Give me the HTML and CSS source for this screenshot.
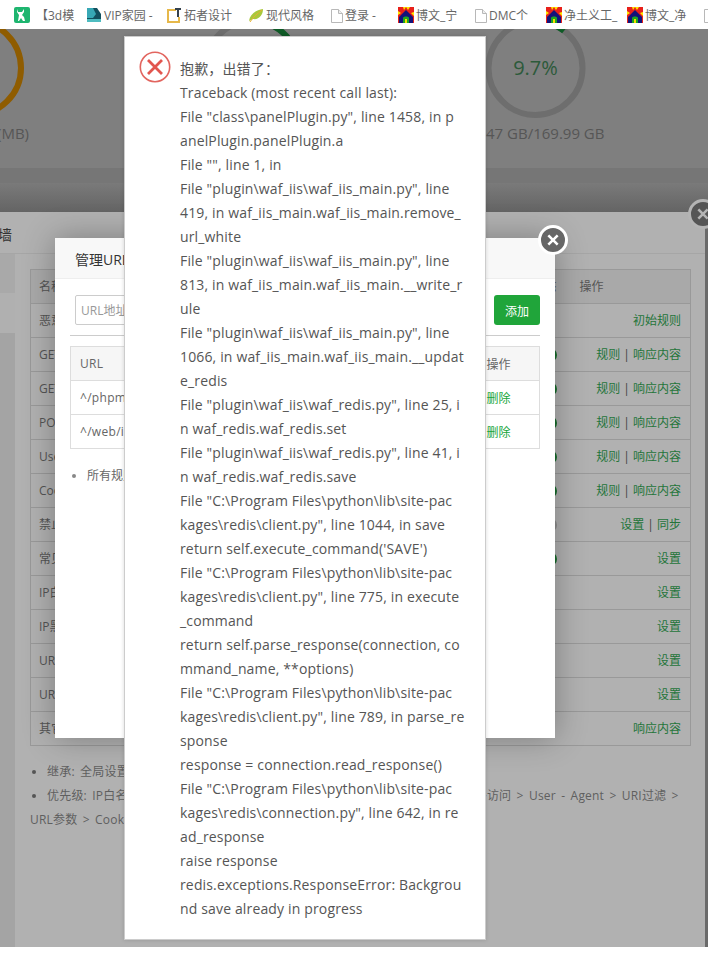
FILE: index.html
```html
<!DOCTYPE html>
<html lang="zh">
<head>
<meta charset="utf-8">
<title>面板</title>
<link rel="stylesheet" href="styles.css">
</head>
<body>
<svg class="defs" width="0" height="0" aria-hidden="true">
  <symbol id="i-house" viewBox="0 0 16 16">
    <rect width="16" height="16" fill="#ffe600"/>
    <path d="M0 0h5l1 3 2-3 2 3 2-3h4v5l-3 1 3 3v7H0V8l3-2-3-2z" fill="#e8201a"/>
    <path d="M8 3 1 10v6h14v-6z" fill="#12127a"/>
    <path d="M5 16v-5c0-2 6-2 6 0v5z" fill="#1fa51f"/>
    <path d="M7 16v-4h2v4z" fill="#f5e000"/>
  </symbol>
  <symbol id="i-page" viewBox="0 0 12 14">
    <path d="M.5.5h7l4 4v9H.5z" fill="#fff" stroke="#b8b8b8"/>
    <path d="M7.5.5v4h4" fill="#eee" stroke="#b8b8b8"/>
  </symbol>
</svg>

<nav class="bar">
  <a class="mark w1"><svg class="fav" viewBox="0 0 16 16"><rect width="16" height="16" rx="2" fill="#1eb56f"/><path d="M3 2l1 3h4l2-3v3l-2 3 2 2 1 4H9L7 11l-2 3H4l1-6-2-3z" fill="#fff"/></svg><span>【3d模</span></a>
  <a class="mark w2"><svg class="fav" viewBox="0 0 16 16"><path d="M1 1h10l4 6v8H1z" fill="#12505e"/><path d="M1 1h6l3 6-3 4H1z" fill="#37a8b5"/><path d="M1 12h14v3H1z" fill="#4fbcc0"/></svg><span>VIP家园 -</span></a>
  <a class="mark w3"><svg class="fav" viewBox="0 0 16 16"><path d="M10 3H2v12h11v-5" fill="none" stroke="#e6b84a" stroke-width="2"/><path d="M9 1h6v2h-2v7h-2V3H9z" fill="#34404c"/></svg><span>拓者设计</span></a>
  <a class="mark w4"><svg class="fav" viewBox="0 0 16 16"><path d="M1 14C2 7 8 3 15 2c0 6-4 11-10 10z" fill="#a8c83c"/><path d="M2 15C5 10 9 7 14 3" stroke="#e8b030" fill="none"/></svg><span>现代风格</span></a>
  <a class="mark w5"><svg class="page" viewBox="0 0 12 14"><use href="#i-page"/></svg><span>登录 -</span></a>
  <a class="mark w6"><svg class="fav"><use href="#i-house"/></svg><span>博文_宁</span></a>
  <a class="mark w7"><svg class="page" viewBox="0 0 12 14"><use href="#i-page"/></svg><span>DMC个</span></a>
  <a class="mark w8"><svg class="fav"><use href="#i-house"/></svg><span>净土义工_</span></a>
  <a class="mark w9"><svg class="fav"><use href="#i-house"/></svg><span>博文_净</span></a>
  <a class="mark"><svg class="page" viewBox="0 0 12 14"><use href="#i-page"/></svg></a>
</nav>

<main class="stage">
  <section class="dash">
    <svg class="rings" viewBox="0 0 708 139" width="708" height="139">
      <circle cx="-26" cy="39" r="47" fill="none" stroke="#8f5c00" stroke-width="6"/>
      <circle cx="252" cy="39" r="47" fill="none" stroke="#6e6e6e" stroke-width="6"/>
      <path d="M272 -3.6A47 47 0 0 1 291 13" fill="none" stroke="#0f5a26" stroke-width="6"/>
      <circle cx="535.500" cy="39" r="47" fill="none" stroke="#6e6e6e" stroke-width="6"/>
      <path d="M535 -8A47 47 0 0 1 564 2" fill="none" stroke="#0f5a26" stroke-width="6"/>
      <text class="ring-pct" x="535.500" y="46" text-anchor="middle">9.7%</text>
      <text class="ring-cap" x="-3" y="110">(MB)</text>
      <text class="ring-cap" x="486" y="110">47 GB/169.99 GB</text>
    </svg>
    <div class="band"></div>
    <div class="fade"></div>
  </section>

  <section class="panel">
    <div class="panel-head">墙</div>
    <div class="panel-main">
      <aside class="side">
        <div class="side-a"></div>
        <div class="side-b"></div>
        <div class="side-c"></div>
      </aside>
      <div class="content">
        <table class="rules">
          <thead><tr><th>名称</th><th class="cstate">状态</th><th class="cop">操作</th></tr></thead>
          <tbody>
            <tr><td>恶意容错</td><td></td><td class="act">初始规则</td></tr>
            <tr><td>GET-URI过滤</td><td class="cstate"><i class="dot"></i></td><td class="act">规则 <b>|</b> 响应内容</td></tr>
            <tr><td>GET-参数过滤</td><td class="cstate"><i class="dot"></i></td><td class="act">规则 <b>|</b> 响应内容</td></tr>
            <tr><td>POST过滤</td><td class="cstate"><i class="dot"></i></td><td class="act">规则 <b>|</b> 响应内容</td></tr>
            <tr><td>User-Agent过滤</td><td class="cstate"><i class="dot"></i></td><td class="act">规则 <b>|</b> 响应内容</td></tr>
            <tr><td>Cookie过滤</td><td class="cstate"><i class="dot"></i></td><td class="act">规则 <b>|</b> 响应内容</td></tr>
            <tr><td>禁止国外</td><td class="cstate"><i class="dot off"></i></td><td class="act">设置 <b>|</b> 同步</td></tr>
            <tr><td>常见扫描器</td><td class="cstate"><i class="dot"></i></td><td class="act">设置</td></tr>
            <tr><td>IP白名单</td><td></td><td class="act">设置</td></tr>
            <tr><td>IP黑名单</td><td></td><td class="act">设置</td></tr>
            <tr><td>URI白名单</td><td></td><td class="act">设置</td></tr>
            <tr><td>URI黑名单</td><td></td><td class="act">设置</td></tr>
            <tr><td>其它规则</td><td></td><td class="act">响应内容</td></tr>
          </tbody>
        </table>
        <ul class="notes">
          <li>继承: 全局设置 &gt; 站点设置</li>
          <li>优先级: IP白名单 &gt; IP黑名单 &gt; URI白名单 &gt; URI黑名单 &gt; 常见扫描 &gt; 禁止国外访问 &gt; User - Agent &gt; URI过滤 &gt;</li>
        </ul>
        <p class="notes-tail">URL参数 &gt; Cookie &gt; POST</p>
      </div>
    </div>
  </section>
  <button class="x x-back" aria-label="关闭"><svg viewBox="0 0 12 12"><path d="M2 2l8 8M10 2l-8 8"/></svg></button>

  <section class="modal">
    <header class="modal-head">管理URL白名单</header>
    <div class="modal-body">
      <div class="add-row">
        <input class="url-input" placeholder="URL地址" readonly>
        <button class="add">添加</button>
      </div>
      <table class="urls">
        <thead><tr><th>URL</th><th class="uop">操作</th></tr></thead>
        <tbody>
          <tr><td>^/phpmyadmin</td><td class="uop del">删除</td></tr>
          <tr><td>^/web/index</td><td class="uop del">删除</td></tr>
        </tbody>
      </table>
      <ul class="tips"><li>所有规则</li></ul>
    </div>
    <button class="x x-modal" aria-label="关闭"><svg viewBox="0 0 12 12"><path d="M2 2l8 8M10 2l-8 8"/></svg></button>
  </section>

  <section class="alert">
    <svg class="err" viewBox="0 0 32 32"><circle cx="16" cy="16" r="14.700" fill="none" stroke="#e2655f" stroke-width="1.600"/><path d="M9 9l14 14M23 9 9 23" stroke="#e2564f" stroke-width="2.800" fill="none"/></svg>
    <p class="trace">抱歉，出错了：<br>Traceback (most recent call last):<br>File "class\panelPlugin.py", line 1458, in p<br>anelPlugin.panelPlugin.a<br>File "", line 1, in<br>File "plugin\waf_iis\waf_iis_main.py", line<br>419, in waf_iis_main.waf_iis_main.remove_<br>url_white<br>File "plugin\waf_iis\waf_iis_main.py", line<br>813, in waf_iis_main.waf_iis_main.__write_r<br>ule<br>File "plugin\waf_iis\waf_iis_main.py", line<br>1066, in waf_iis_main.waf_iis_main.__updat<br>e_redis<br>File "plugin\waf_iis\waf_redis.py", line 25, i<br>n waf_redis.waf_redis.set<br>File "plugin\waf_iis\waf_redis.py", line 41, i<br>n waf_redis.waf_redis.save<br>File "C:\Program Files\python\lib\site-pac<br>kages\redis\client.py", line 1044, in save<br>return self.execute_command('SAVE')<br>File "C:\Program Files\python\lib\site-pac<br>kages\redis\client.py", line 775, in execute<br>_command<br>return self.parse_response(connection, co<br>mmand_name, **options)<br>File "C:\Program Files\python\lib\site-pac<br>kages\redis\client.py", line 789, in parse_re<br>sponse<br>response = connection.read_response()<br>File "C:\Program Files\python\lib\site-pac<br>kages\redis\connection.py", line 642, in re<br>ad_response<br>raise response<br>redis.exceptions.ResponseError: Backgrou<br>nd save already in progress</p>
  </section>
</main>
<div class="foot"></div>
</body>
</html>
```

FILE: styles.css
```css
* { box-sizing: border-box; }
html, body { margin: 0; padding: 0; }
body {
  width: 708px;
  height: 960px;
  overflow: hidden;
  background: #fff;
  font-family: "Open Sans", "Noto Sans CJK SC", sans-serif;
  color: #555;
}
.defs { position: absolute; }

/* bookmarks */
.bar {
  display: flex;
  align-items: center;
  height: 29px;
  padding-left: 14px;
  background: #fff;
  font-size: 12px;
  color: #666;
  white-space: nowrap;
  overflow: hidden;
}
.mark { display: flex; align-items: center; flex: none; }
.mark span { margin-left: 2px; }
.fav { width: 16px; height: 16px; flex: none; }
.page { width: 12px; height: 14px; flex: none; margin-top: 2px; }
.w1 { width: 72px; }
.w1 span { margin-left: 6px; }
.w2 { width: 80px; }
.w3 { width: 82px; }
.w4 { width: 83px; }
.w5 { width: 67px; }
.w6 { width: 77px; }
.w7 { width: 71px; }
.w8 { width: 81px; }
.w9 { width: 77px; }

/* page under the overlay */
.stage {
  position: relative;
  height: 918px;
  background: #6a6a6a;
  overflow: hidden;
}
.dash { height: 183px; background: #7f7f7f; display: flex; flex-direction: column; }
.rings { display: block; height: 139px; flex: none; overflow: visible; }
.ring-pct { font-size: 20px; fill: #2c5a3a; }
.ring-cap { font-size: 15px; fill: #565656; }
.band { height: 15px; background: #767676; flex: none; }
.fade { height: 29px; background: linear-gradient(#7a7a7a, #646464); flex: none; }

.panel {
  width: 705px;
  height: 735px;
  background: #b1b1b1;
}
.panel-head {
  height: 42px;
  line-height: 45px;
  font-size: 14px;
  color: #333;
  border-bottom: 1px solid #a6a6a6;
  margin-left: -2px;
}
.panel-main { display: flex; }
.side { width: 15px; flex: none; display: flex; flex-direction: column; height: 693px; background: #a5a5a5; }
.side-a { height: 39px; background: #a9a9a9; }
.side-b { height: 40px; background: #b0b0b0; }
.side-c { flex: 1; background: #a4a4a4; }

.content { padding: 15px 15px 0; width: 690px; }
.rules {
  width: 660px;
  table-layout: fixed;
  border-collapse: collapse;
  font-size: 12px;
  color: #555;
  border: 1px solid #999;
}
.rules th, .rules td {
  height: 34px;
  padding: 0 9px 2px 8px;
  border-bottom: 1px solid #999;
  text-align: left;
  font-weight: 400;
}
.rules th { background: #a9a9a9; }
.rules th:first-child, .rules td:first-child { width: 490px; }
.rules .cstate { width: 38px; text-align: right; padding: 0 2px 2px 0; }
.rules .cop { width: 132px; padding-left: 21px; }
.rules .act { text-align: right; color: #24753a; }
.rules b { font-weight: 400; color: #444; }
.dot { display: inline-block; width: 14px; height: 14px; border-radius: 50%; background: #156c2a; vertical-align: middle; }
.dot.off { background: #8d8d8d; }

.notes {
  margin: 14px 0 0;
  padding: 0 0 0 17px;
  font-size: 12px;
  line-height: 24px;
  color: #5f5f5f;
  white-space: nowrap;
  letter-spacing: .2px;
  word-spacing: 2px;
}
.notes li { padding-left: 0; }
.notes li::marker { color: #555; font-size: 11px; }
.notes-tail { margin: 0; font-size: 12px; line-height: 24px; color: #5f5f5f; letter-spacing: .2px; word-spacing: 2px; }

/* nested dialog */
.modal {
  position: absolute;
  left: 55px;
  top: 209px;
  width: 500px;
  height: 500px;
  background: #fff;
  box-shadow: 0 0 30px rgba(0, 0, 0, .3);
}
.modal-head {
  height: 41px;
  padding-left: 20px;
  line-height: 44px;
  font-size: 14px;
  color: #333;
  background: #f8f8f8;
  border-bottom: 1px solid #eee;
  white-space: nowrap;
}
.modal-body { padding: 16px 15px 0; }
.add-row {
  display: flex;
  justify-content: space-between;
  padding: 0 0 10px 5px;
  border-bottom: 1px solid #ccc;
}
.url-input {
  width: 190px;
  height: 30px;
  padding: 0 5px;
  border: 1px solid #ccc;
  border-radius: 2px;
  font: 12px "Open Sans", "Noto Sans CJK SC", sans-serif;
}
.url-input::placeholder { color: #999; }
.add {
  width: 46px;
  height: 30px;
  padding: 0;
  border: 0;
  border-radius: 3px;
  background: #20a53a;
  color: #fff;
  font: 12px "Noto Sans CJK SC", sans-serif;
}
.urls {
  width: 470px;
  margin-top: 10px;
  border-collapse: collapse;
  table-layout: fixed;
  border: 1px solid #ddd;
  font-size: 12px;
  color: #666;
}
.urls th, .urls td {
  height: 34px;
  padding: 0 9px;
  text-align: left;
  font-weight: 400;
  border-bottom: 1px solid #ddd;
  letter-spacing: .3px;
}
.urls th { background: #f6f6f6; }
.urls .uop { width: 63px; padding: 0 0 0 10px; letter-spacing: 0; }
.urls .del { color: #20a53a; }
.tips { margin: 15px 0 0; padding: 0 0 0 17px; font-size: 12px; line-height: 24px; color: #666; }
.tips li::marker { color: #888; font-size: 11px; }

/* close buttons */
.x {
  position: absolute;
  width: 30px;
  height: 30px;
  padding: 5px;
  border: 3px solid #fff;
  border-radius: 50%;
  background: #666;
}
.x svg { display: block; width: 100%; height: 100%; }
.x path { stroke: #fff; stroke-width: 2.200; fill: none; }
.x-modal { right: -13px; top: -13px; }
.x-back { left: 688px; top: 170px; border-color: #b4b4b4; background: #555; }
.x-back path { stroke: #b4b4b4; }

/* error dialog */
.alert {
  position: absolute;
  left: 124px;
  top: 7px;
  width: 362px;
  height: 904px;
  padding: 20px 0 0 55px;
  background: #fff;
  border: 1px solid #ccc;
  box-shadow: 0 0 4px rgba(0, 0, 0, .15);
}
.err { position: absolute; left: 14px; top: 14px; width: 32px; height: 32px; }
.trace { margin: 0; font-size: 14px; line-height: 24px; letter-spacing: .15px; color: #555; white-space: nowrap; }

.foot { height: 13px; background: #fff; }
```
